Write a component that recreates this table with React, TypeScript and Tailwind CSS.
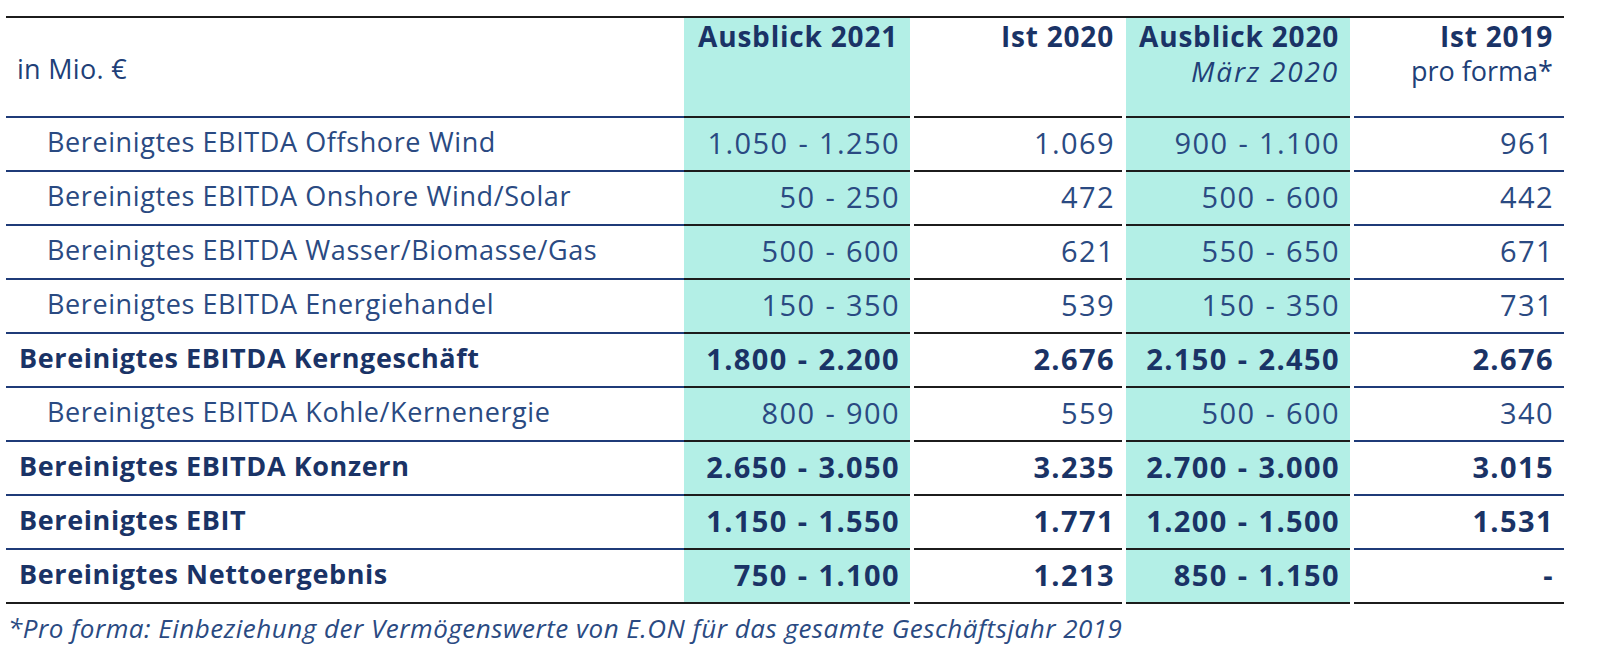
import React from 'react';

type Row = {
  label: string;
  values: [string, string, string, string];
  bold?: boolean;
};

const rows: Row[] = [
  { label: 'Bereinigtes EBITDA Offshore Wind', values: ['1.050 - 1.250', '1.069', '900 - 1.100', '961'] },
  { label: 'Bereinigtes EBITDA Onshore Wind/Solar', values: ['50 - 250', '472', '500 - 600', '442'] },
  { label: 'Bereinigtes EBITDA Wasser/Biomasse/Gas', values: ['500 - 600', '621', '550 - 650', '671'] },
  { label: 'Bereinigtes EBITDA Energiehandel', values: ['150 - 350', '539', '150 - 350', '731'] },
  { label: 'Bereinigtes EBITDA Kerngeschäft', values: ['1.800 - 2.200', '2.676', '2.150 - 2.450', '2.676'], bold: true },
  { label: 'Bereinigtes EBITDA Kohle/Kernenergie', values: ['800 - 900', '559', '500 - 600', '340'] },
  { label: 'Bereinigtes EBITDA Konzern', values: ['2.650 - 3.050', '3.235', '2.700 - 3.000', '3.015'], bold: true },
  { label: 'Bereinigtes EBIT', values: ['1.150 - 1.550', '1.771', '1.200 - 1.500', '1.531'], bold: true },
  { label: 'Bereinigtes Nettoergebnis', values: ['750 - 1.100', '1.213', '850 - 1.150', '-'], bold: true },
];

// widths of the four value columns, the first one sits flush to the label column
const cols = [
  'w-[226px] bg-[#b3efe6]',
  'w-[208px] ml-[4px]',
  'w-[224px] ml-[4px] bg-[#b3efe6]',
  'w-[210px] ml-[4px]',
];

const head = 'text-[28px] leading-[36px] font-bold tracking-[0.8px] text-[#1a3366]';

export default function App() {
  return (
    <div className="min-h-screen bg-white pt-[16px] pl-[6px] text-[#213f78]" style={{ fontFamily: '"Open Sans", "Noto Sans", sans-serif' }}>
      <div className="w-[1558px] border-t-2 border-[#1c1c1c]">
        {/* header */}
        <div className="flex h-[100px]">
          <div className="w-[678px] border-b-2 border-[#1f3b78] pl-[11px] pt-[31px] text-[27px] tracking-[0.3px]">in Mio. €</div>
          <div className={`${cols[0]} border-b-2 border-[#1c1c1c] pr-[12px] text-right ${head}`}>Ausblick 2021</div>
          <div className={`${cols[1]} border-b-2 border-[#1c1c1c] pr-[8px] text-right ${head}`}>Ist 2020</div>
          <div className={`${cols[2]} border-b-2 border-[#1c1c1c] pr-[11px] text-right`}>
            <div className={head}>Ausblick 2020</div>
            <div className="text-[28px] leading-[34px] italic tracking-[1.8px]">März 2020</div>
          </div>
          <div className={`${cols[3]} border-b-2 border-[#1f3b78] pr-[11px] text-right`}>
            <div className={head}>Ist 2019</div>
            <div className="text-[27px] leading-[34px]">pro forma*</div>
          </div>
        </div>

        {rows.map((r, i) => {
          const last = i === rows.length - 1;
          const labelLine = last ? 'border-[#1c1c1c]' : 'border-[#1f3b78]';
          const weight = r.bold ? 'font-bold text-[#1a3366]' : 'text-[#2a4a82]';
          return (
            <div key={r.label} className={`flex h-[54px] ${weight}`}>
              <div className={`w-[678px] flex items-center border-b-2 pb-[3px] text-[27px] tracking-[0.6px] ${labelLine} ${r.bold ? 'pl-[13px]' : 'pl-[41px]'}`}>
                {r.label}
              </div>
              {r.values.map((v, j) => (
                <div
                  key={j}
                  className={`${cols[j]} flex items-center justify-end border-b-2 pb-[3px] text-[29px] tracking-[1.4px] [word-spacing:1px] ${
                    j === 3 && !last ? 'border-[#1f3b78]' : 'border-[#1c1c1c]'
                  } ${j === 1 ? 'pr-[7px]' : 'pr-[10px]'}`}
                >
                  {v}
                </div>
              ))}
            </div>
          );
        })}
      </div>
      <p className="mt-[5px] pl-[2px] text-[26px] italic tracking-[0.5px] text-[#2a4a82]">
        *Pro forma: Einbeziehung der Vermögenswerte von E.ON für das gesamte Geschäftsjahr 2019
      </p>
    </div>
  );
}
